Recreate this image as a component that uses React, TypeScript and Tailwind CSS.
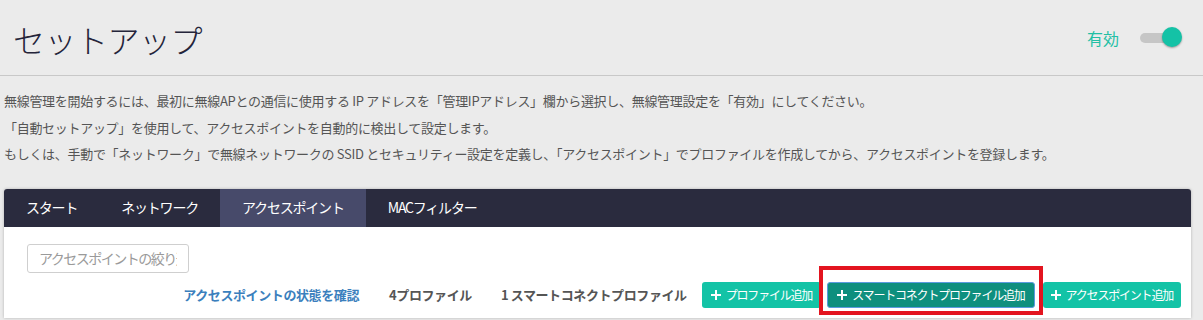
import React from 'react';

const tabs = ['スタート', 'ネットワーク', 'アクセスポイント', 'MACフィルター'];

const Plus = () => (
  <svg width="10" height="10" viewBox="0 0 10 10" className="mr-[5px] shrink-0">
    <path d="M5 0v10M0 5h10" stroke="currentColor" strokeWidth="2" />
  </svg>
);

export default function App() {
  return (
    <div
      className="min-h-[320px] w-[1203px] overflow-hidden bg-[#ebebeb] text-[#555]"
      style={{ fontFamily: '"Noto Sans CJK JP", "Liberation Sans", sans-serif' }}
    >
      {/* header */}
      <div className="flex h-[76px] items-center justify-between border-b border-[#c8c8c8] pl-[13px] pr-[20px]">
        <h1 className="mt-[2px] text-[32px] font-light leading-none tracking-[-0.5px] text-[#24243a]">セットアップ</h1>
        <div className="flex items-center gap-[20px]">
          <span className="text-[16px] text-[#22bfa4]">有効</span>
          <div className="relative h-[22px] w-[44px]">
            <div className="absolute left-[1px] top-[6px] h-[10px] w-[32px] rounded-full bg-[#c6c6c6]" />
            <div className="absolute right-[1px] top-0 h-[20px] w-[20px] rounded-full bg-[#14c2a6] shadow-[0_1px_2px_rgba(0,0,0,0.35)]" />
          </div>
        </div>
      </div>

      {/* description */}
      <div className="px-[4px] pt-[12px] text-[13px] leading-[26.5px] tracking-[-0.3px] text-[#555]">
        <p>無線管理を開始するには、最初に無線APとの通信に使用する IP アドレスを「管理IPアドレス」欄から選択し、無線管理設定を「有効」にしてください。</p>
        <p>「自動セットアップ」を使用して、アクセスポイントを自動的に検出して設定します。</p>
        <p>もしくは、手動で「ネットワーク」で無線ネットワークの SSID とセキュリティー設定を定義し、「アクセスポイント」でプロファイルを作成してから、アクセスポイントを登録します。</p>
      </div>

      {/* card */}
      <div className="ml-[4px] mt-[21px] w-[1187px] rounded-t-[3px] bg-white shadow-[0_0_3px_rgba(0,0,0,0.25)]">
        <div className="flex h-[38px] rounded-t-[3px] bg-[#2a2b3e] text-[14px] tracking-[-1.2px] text-white">
          {tabs.map((t, i) => (
            <div
              key={t}
              className={`flex items-center px-[22px] ${i === 2 ? 'bg-[#474a6a]' : ''}`}
            >
              {t}
            </div>
          ))}
        </div>
        <div className="px-[10px] pb-[10px] pt-[17px]">
          <input
            type="text"
            placeholder="アクセスポイントの絞り込み"
            className="ml-[13px] block h-[29px] w-[162px] rounded-[3px] border border-[#cfcfcf] px-[11px] text-[14px] tracking-[-1.5px] text-[#555] outline-none placeholder:text-[#9a9a9a]"
          />
          <div className="mt-[9px] flex items-center justify-end text-[13px] tracking-[-0.4px]">
            <span className="font-bold text-[#3b7fbd]">アクセスポイントの状態を確認</span>
            <span className="ml-[30px] font-bold text-[#555]">4プロファイル</span>
            <span className="ml-[29px] font-bold text-[#555]">1 スマートコネクトプロファイル</span>
            <button className="ml-[15px] flex h-[26px] items-center rounded-[3px] bg-[#13c3a6] px-[9px] text-[12px] tracking-[-1.2px] text-white">
              <Plus />プロファイル追加
            </button>
            <div className="relative ml-[6px]">
              <button className="flex h-[26px] items-center rounded-[3px] border border-[#5b9be0] bg-[#0e8f7e] px-[9px] text-[12px] tracking-[-1.2px] text-white">
                <Plus />スマートコネクトプロファイル追加
              </button>
              <div className="pointer-events-none absolute -bottom-[7px] -left-[8px] -right-[8px] -top-[16px] border-[4px] border-[#e3141f]" />
            </div>
            <button className="ml-[8px] flex h-[26px] items-center rounded-[3px] bg-[#13c3a6] px-[8px] text-[12px] tracking-[-1.2px] text-white">
              <Plus />アクセスポイント追加
            </button>
          </div>
        </div>
      </div>
    </div>
  );
}
